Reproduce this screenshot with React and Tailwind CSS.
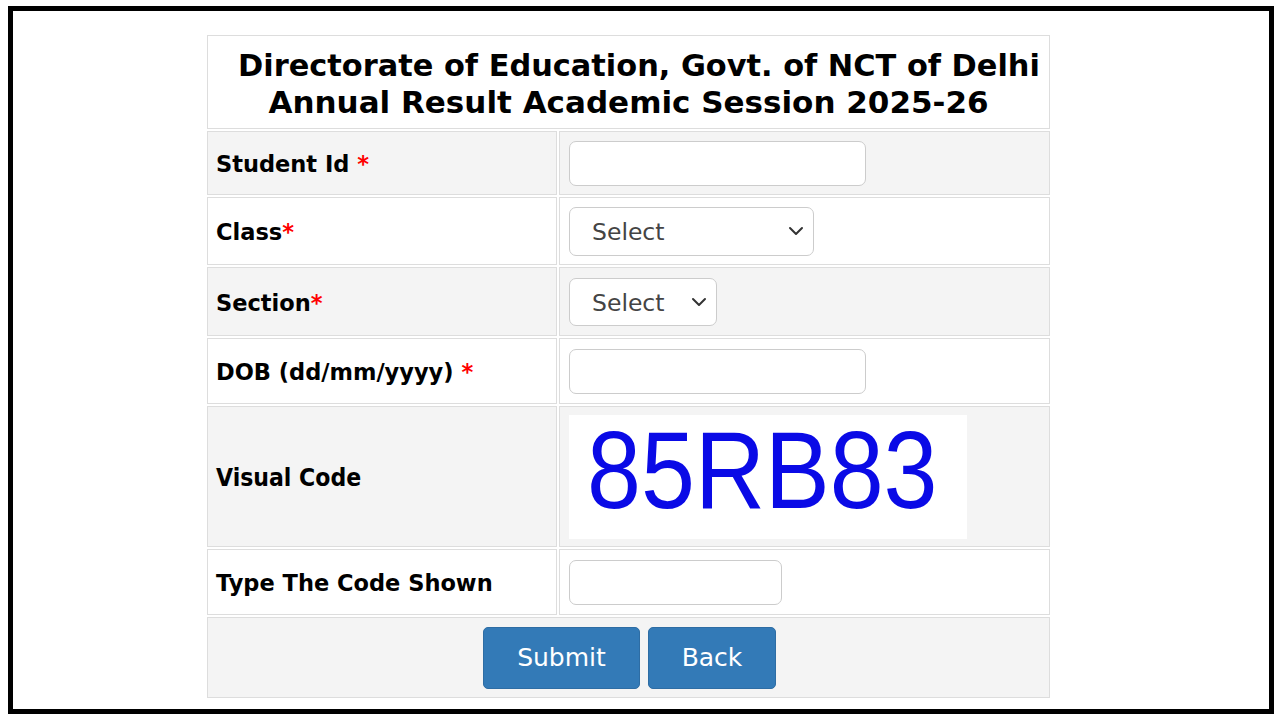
import { useState } from "react";
import { ChevronDown } from "lucide-react";

const verdana = { fontFamily: '"DejaVu Sans", Verdana, sans-serif' };

const Label = ({ children, star, gap = true }) => (
  <span className="text-[22.5px] font-bold text-black pt-[4px]">
    {children}
    {star && <span className="text-[#ff0000]">{gap ? " *" : "*"}</span>}
  </span>
);

const Row = ({ bg, h, label, children }) => (
  <div className={`grid grid-cols-[350px_1fr] gap-[2px] ${h}`}>
    <div className={`${bg} border border-[#dddddd] flex items-center pl-[8px]`}>{label}</div>
    <div className={`${bg} border border-[#dddddd] flex items-center pl-[9px]`}>{children}</div>
  </div>
);

const TextBox = ({ w, value, onChange }) => (
  <input
    type="text"
    value={value}
    onChange={(e) => onChange(e.target.value)}
    className={`${w} h-[45px] bg-white border border-[#cccccc] rounded-[7px] px-3 text-[20px] outline-none`}
  />
);

const SelectBox = ({ w, h, options }) => (
  <div className={`relative ${w}`}>
    <select
      className={`appearance-none w-full ${h} bg-white border border-[#cccccc] rounded-[7px] pl-[22px] pt-[4px] text-[23.5px] text-[#444444] outline-none`}
      style={verdana}
      defaultValue=""
    >
      <option value="">Select</option>
      {options.map((o) => (
        <option key={o}>{o}</option>
      ))}
    </select>
    <ChevronDown
      className="absolute right-[6px] top-1/2 -translate-y-1/2 pointer-events-none text-[#333333]"
      size={24}
      strokeWidth={2}
    />
  </div>
);

export default function App() {
  const [studentId, setStudentId] = useState("");
  const [dob, setDob] = useState("");
  const [code, setCode] = useState("");

  return (
    <div className="w-[1280px] h-[720px] bg-white pt-[6px] pl-[8px]" style={verdana}>
      <div className="w-[1266px] h-[708px] border-[5px] border-black pt-[24px] pl-[194px]">
        <div className="w-[843px] flex flex-col gap-[2px]">
          {/* Header */}
          <div className="h-[94px] bg-white border border-[#dddddd] flex flex-col items-center justify-center pt-[4px] font-bold leading-[37px] text-black">
            <div className="pl-[21px] whitespace-nowrap text-[30.4px]">
              Directorate of Education, Govt. of NCT of Delhi
            </div>
            <div className="whitespace-nowrap text-[31px]">Annual Result Academic Session 2025-26</div>
          </div>

          <Row bg="bg-[#f4f4f4]" h="h-[64px]" label={<Label star>Student Id</Label>}>
            <TextBox w="w-[297px]" value={studentId} onChange={setStudentId} />
          </Row>

          <Row bg="bg-white" h="h-[68px]" label={<Label star gap={false}>Class</Label>}>
            <SelectBox
              w="w-[245px]"
              h="h-[49px]"
              options={["I", "II", "III", "IV", "V", "VI", "VII", "VIII", "IX", "X", "XI", "XII"]}
            />
          </Row>

          <Row bg="bg-[#f4f4f4]" h="h-[69px]" label={<Label star gap={false}>Section</Label>}>
            <SelectBox w="w-[148px]" h="h-[48px]" options={["A", "B", "C", "D", "E"]} />
          </Row>

          <Row bg="bg-white" h="h-[66px]" label={<Label star>DOB (dd/mm/yyyy)</Label>}>
            <TextBox w="w-[297px]" value={dob} onChange={setDob} />
          </Row>

          <Row
            bg="bg-[#f4f4f4]"
            h="h-[141px]"
            label={
              <span
                className="text-[24.5px] font-bold text-black pt-[4px]"
                style={{ fontFamily: '"DejaVu Sans Condensed", "DejaVu Sans", sans-serif' }}
              >
                Visual Code
              </span>
            }
          >
            <div className="w-[398px] h-[124px] bg-white flex items-center pl-[18px] pb-[12px]">
              <span
                className="text-[97px] leading-none text-[#0a0ae6] scale-y-[1.12]"
                style={{ fontFamily: '"Liberation Sans", Arial, sans-serif' }}
              >
                85RB83
              </span>
            </div>
          </Row>

          <Row bg="bg-white" h="h-[66px]" label={<Label>Type The Code Shown</Label>}>
            <TextBox w="w-[213px]" value={code} onChange={setCode} />
          </Row>

          {/* Buttons */}
          <div className="h-[81px] bg-[#f4f4f4] border border-[#dddddd] flex items-center gap-[8px] pl-[275px]">
            <button className="w-[157px] h-[62px] bg-[#337ab7] border border-[#2e6da4] rounded-[5px] text-white text-[25px]">
              Submit
            </button>
            <button className="w-[128px] h-[62px] bg-[#337ab7] border border-[#2e6da4] rounded-[5px] text-white text-[25px]">
              Back
            </button>
          </div>
        </div>
      </div>
    </div>
  );
}
